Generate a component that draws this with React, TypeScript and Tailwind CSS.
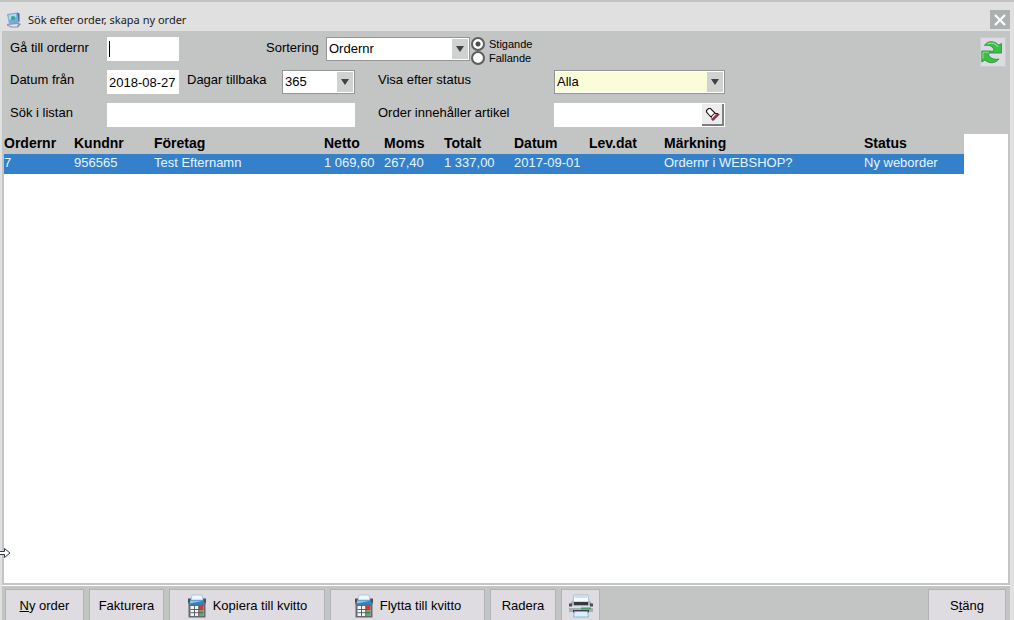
import React from 'react';

const columns = [
  { title: 'Ordernr', width: 'w-[70px]', value: '7' },
  { title: 'Kundnr', width: 'w-20', value: '956565' },
  { title: 'Företag', width: 'w-[170px]', value: 'Test Efternamn' },
  { title: 'Netto', width: 'w-15', value: '1 069,60' },
  { title: 'Moms', width: 'w-15', value: '267,40' },
  { title: 'Totalt', width: 'w-[70px]', value: '1 337,00' },
  { title: 'Datum', width: 'w-[75px]', value: '2017-09-01' },
  { title: 'Lev.dat', width: 'w-[75px]', value: '' },
  { title: 'Märkning', width: 'w-[200px]', value: 'Ordernr i WEBSHOP?' },
  { title: 'Status', width: 'w-[100px]', value: 'Ny weborder' },
];

const AppIcon = () => (
  <svg width="16" height="16" viewBox="0 0 16 16">
    <path d="M1 12l10-2 4 2-3 3.500H5l-4-2z" fill="#8d92ae" />
    <path d="M2 13l10-1-1 2.500H6z" fill="#dfe3f2" />
    <path d="M1 2l10-1.500 1.500 10L3 12z" fill="#8fa2d0" />
    <path d="M11 .5l2.500 1v8l-1 1z" fill="#56609a" />
    <path d="M2.300 3l8-1.200 1 7.700-7.800 1z" fill="#5fb4e2" />
    <path d="M2.500 3l7.500-1.200.4 3L3 8z" fill="#a5dcf2" />
    <path d="M5 4.500l3.500-.4.4 3.400-3.500.4z" fill="#3aa08c" />
  </svg>
);

const RefreshIcon = () => (
  <svg width="22" height="24" viewBox="0 0 22 24">
    <g fill="#3cbf45" stroke="#258a38" strokeWidth=".8" strokeLinejoin="round">
      <path d="M3.500 5.500C6 .8 13 .2 17.500 5L20.500 3.500v9.500H9.500l3.500-3C11.800 6.500 8.500 4.500 3.500 5.500z" />
      <path d="M18 19c-3.500 4.500-10 5-14 1L.8 22v-11H10.500L7.500 14.500c1.200 3.700 5.500 5.500 10.500 4.500z" />
    </g>
    <path d="M6.500 3.800c4-1.500 8-.3 10.500 3" fill="none" stroke="#86e383" strokeWidth="1.300" />
    <path d="M2 12.300h6M2 12.500v6" fill="none" stroke="#86e383" strokeWidth="1.100" />
  </svg>
);

const TorchIcon = () => (
  <svg width="15" height="15" viewBox="0 0 15 15">
    <path d="M1.500 3.500l2-2h2L10 6l-4 4-4.500-5z" fill="#fff" stroke="#1a1416" strokeWidth="1.100" />
    <path d="M9.500 6.500H13l1 1L8 13.500l-1-1V9.500z" fill="#a33a50" stroke="#4d1222" />
    <path d="M9.500 7l-2.500 2.500v2L11 7z" fill="#fff" />
  </svg>
);

const CalculatorIcon = () => (
  <svg width="20" height="24" viewBox="0 0 20 24">
    <path d="M1 4.500h18v5H1z" fill="#4a4f57" />
    <path d="M5 1h10l1 5H4z" fill="#eef6ff" stroke="#9fb9d6" strokeWidth=".7" />
    <path d="M1.500 8h17v15.500h-17z" fill="#646b70" />
    <path d="M3 6.500h14v4H3z" fill="#2d86c8" />
    <path d="M3 6.500h14L3 9.500z" fill="#84c8ef" />
    <path d="M3.500 12h13v10h-13z" fill="#f4f5f3" />
    <path d="M12 12h4.500v3H12z" fill="#d8343a" />
    <path d="M12 16h4.500v6H12z" fill="#6fa866" />
    <path d="M3.500 15.500h13M3.500 18.700h13M7.500 12v10M11.700 12v10" stroke="#50565c" strokeWidth=".9" fill="none" />
  </svg>
);

const PrinterIcon = () => (
  <svg width="26" height="24" viewBox="0 0 26 24">
    <path d="M6 1h14l1 7H5z" fill="#f4faff" stroke="#8fb4d4" strokeWidth=".8" />
    <path d="M7 3h12" stroke="#a9cfea" strokeWidth="1.200" />
    <path d="M4 7h2v2h14V7h2l3 4.500V18H1v-6.500z" fill="#a9aeb3" />
    <path d="M6 8h14v3.500H6z" fill="#343a42" />
    <path d="M1 11.500h24v2.500H1z" fill="#dde0e2" />
    <path d="M13 13.500h10v2H13z" fill="#4f9a68" />
    <path d="M1 9.500h3v3H1zM22 9.500h3v3h-3z" fill="#4a4f57" />
    <path d="M5 16h16v2.500H5z" fill="#3c434b" />
    <path d="M6.500 17.500h13l1 5.500h-15z" fill="#d9efff" stroke="#7fa9cc" strokeWidth=".8" />
  </svg>
);

const fieldClass = 'h-6 bg-white px-0.5 outline-none';

type SelectProps = { id: string; value: string; className: string; fill?: string };

const SelectBox = ({ id, value, className, fill = 'bg-white' }: SelectProps) => (
  <div className={`relative h-6 border border-[#949696] bg-white p-px ${className}`}>
    <select id={id} className={`block h-full w-full appearance-none px-px leading-5 outline-none ${fill}`}>
      <option>{value}</option>
    </select>
    <span className="pointer-events-none absolute inset-y-px right-px flex w-4 items-center justify-center bg-[#d0d1d1]">
      <svg width="8" height="6" viewBox="0 0 8 6"><path d="M0 0h8L4 6z" fill="#404244" /></svg>
    </span>
  </div>
);

type ButtonProps = { className: string; children: React.ReactNode; label?: string };

const FooterButton = ({ className, children, label }: ButtonProps) => (
  <button
    aria-label={label}
    className={`flex h-full items-center justify-center border border-b-0 border-[#b2b3b8] bg-[#dedbe1] pt-0.5 ${className}`}
  >
    {children}
  </button>
);

const App = () => {
  return (
    <div className="flex h-screen flex-col overflow-hidden border-t-2 border-[#c1c2c2] bg-[#dfe0df] font-['Liberation_Sans',Arial,sans-serif] text-[13px] leading-4 text-black">
      {/* Title bar */}
      <header className="flex h-[29px] shrink-0 items-center pt-1.5 pr-1 pl-1.5">
        <AppIcon />
        <h1 className="ml-1.5 font-['Noto_Sans',sans-serif] text-[11px] text-[#202020]">Sök efter order, skapa ny order</h1>
        <button aria-label="Stäng fönster" className="ml-auto flex h-[19px] w-5 items-center justify-center bg-[#adb0b1]">
          <svg width="12" height="12" viewBox="0 0 12 12"><path d="M1 1l10 10M11 1L1 11" stroke="#fff" strokeWidth="2.200" /></svg>
        </button>
      </header>

      <div className="mr-1 ml-0.5 flex min-h-0 grow flex-col bg-[#c3c4c4]">
        {/* Search form */}
        <form className="flex shrink-0 items-start justify-between pt-1.5 pr-1 pb-[7px] pl-2">
          <div className="flex flex-col gap-[9px]">
            <div className="flex h-6 items-start">
              <label htmlFor="goto" className="w-[97px] pt-[3px]">Gå till ordernr</label>
              <div className="relative">
                <input id="goto" className={`block w-[72px] caret-transparent ${fieldClass}`} />
                <span className="absolute top-1 left-0.5 h-4 w-px bg-black" />
              </div>
              <label htmlFor="sort" className="ml-[87px] w-15 pt-[3px]">Sortering</label>
              <SelectBox id="sort" value="Ordernr" className="w-36" />
              <div className="ml-px flex flex-col text-[11px] leading-[14px]">
                {['Stigande', 'Fallande'].map((name, i) => (
                  <label key={name} className="flex h-3.5 items-center gap-1">
                    <input
                      type="radio"
                      name="direction"
                      defaultChecked={i === 0}
                      className="size-3.5 appearance-none rounded-full border-2 border-[#5d5f60] bg-white bg-clip-padding checked:bg-[radial-gradient(circle,#4b4d4e_0_2px,#fff_3px)]"
                    />
                    {name}
                  </label>
                ))}
              </div>
            </div>
            <div className="flex h-6 items-start">
              <label htmlFor="from" className="w-[97px] pt-0.5">Datum från</label>
              <input id="from" defaultValue="2018-08-27" className={`w-[72px] ${fieldClass}`} />
              <label htmlFor="days" className="ml-2 w-[95px] pt-0.5">Dagar tillbaka</label>
              <SelectBox id="days" value="365" className="w-[73px]" />
              <label htmlFor="status" className="ml-[23px] w-44 pt-0.5">Visa efter status</label>
              <SelectBox id="status" value="Alla" className="w-[171px]" fill="bg-[#fbfcd8]" />
            </div>
            <div className="flex h-6 items-start">
              <label htmlFor="search" className="w-[97px] pt-0.5">Sök i listan</label>
              <input id="search" className={`w-[248px] ${fieldClass}`} />
              <label htmlFor="article" className="ml-[23px] w-44 pt-0.5">Order innehåller artikel</label>
              <div className="flex h-6 w-[171px] items-center bg-white">
                <input id="article" className="min-w-0 grow px-0.5 outline-none" />
                <button type="button" aria-label="Sök artikel" className="mr-px flex h-[22px] w-[22px] shrink-0 items-center justify-center border-r-2 border-b-2 border-[#7d8082] bg-[#ececec]">
                  <TorchIcon />
                </button>
              </div>
            </div>
          </div>
          <button type="button" aria-label="Uppdatera" className="flex h-[30px] w-[26px] items-center justify-start border border-[#cccbd2] bg-[#dddbe2]">
            <RefreshIcon />
          </button>
        </form>

        {/* Order list */}
        <main className="relative mx-0.5 grow bg-white">
          <table className="w-[960px] table-fixed border-collapse text-left">
            <thead className="bg-[#c3c4c4]">
              <tr className="h-5">
                {columns.map((c) => (
                  <th key={c.title} className={`p-0 pb-0.5 text-sm leading-4 font-bold ${c.width}`}>{c.title}</th>
                ))}
              </tr>
            </thead>
            <tbody>
              <tr className="h-5 bg-[#3580cb] text-[#e4f5ff]">
                {columns.map((c) => (
                  <td key={c.title} className="p-0 pb-0.5 leading-4 whitespace-nowrap">{c.value}</td>
                ))}
              </tr>
            </tbody>
          </table>
          <svg className="absolute bottom-6 -left-1" width="11" height="12" viewBox="0 0 11 12">
            <path d="M0 4.500h4.500V1.500L10 6l-5.500 4.500v-3H0" fill="#fff" stroke="#333a44" />
          </svg>
        </main>

        {/* Action buttons */}
        <footer className="mt-0.5 flex h-[35px] shrink-0 gap-[5px] border-t border-white pt-[3px] pr-1 pl-[3px]">
          <FooterButton className="w-[79px]"><span><u>N</u>y order</span></FooterButton>
          <FooterButton className="w-[75px]">Fakturera</FooterButton>
          <FooterButton className="w-[156px] gap-1.5"><CalculatorIcon />Kopiera till kvitto</FooterButton>
          <FooterButton className="w-[155px] gap-1.5"><CalculatorIcon />Flytta till kvitto</FooterButton>
          <FooterButton className="w-[66px]">Radera</FooterButton>
          <FooterButton className="w-[39px]" label="Skriv ut"><PrinterIcon /></FooterButton>
          <FooterButton className="ml-auto w-[78px]"><span>S<u>t</u>äng</span></FooterButton>
        </footer>
      </div>
    </div>
  );
};

export default App;
